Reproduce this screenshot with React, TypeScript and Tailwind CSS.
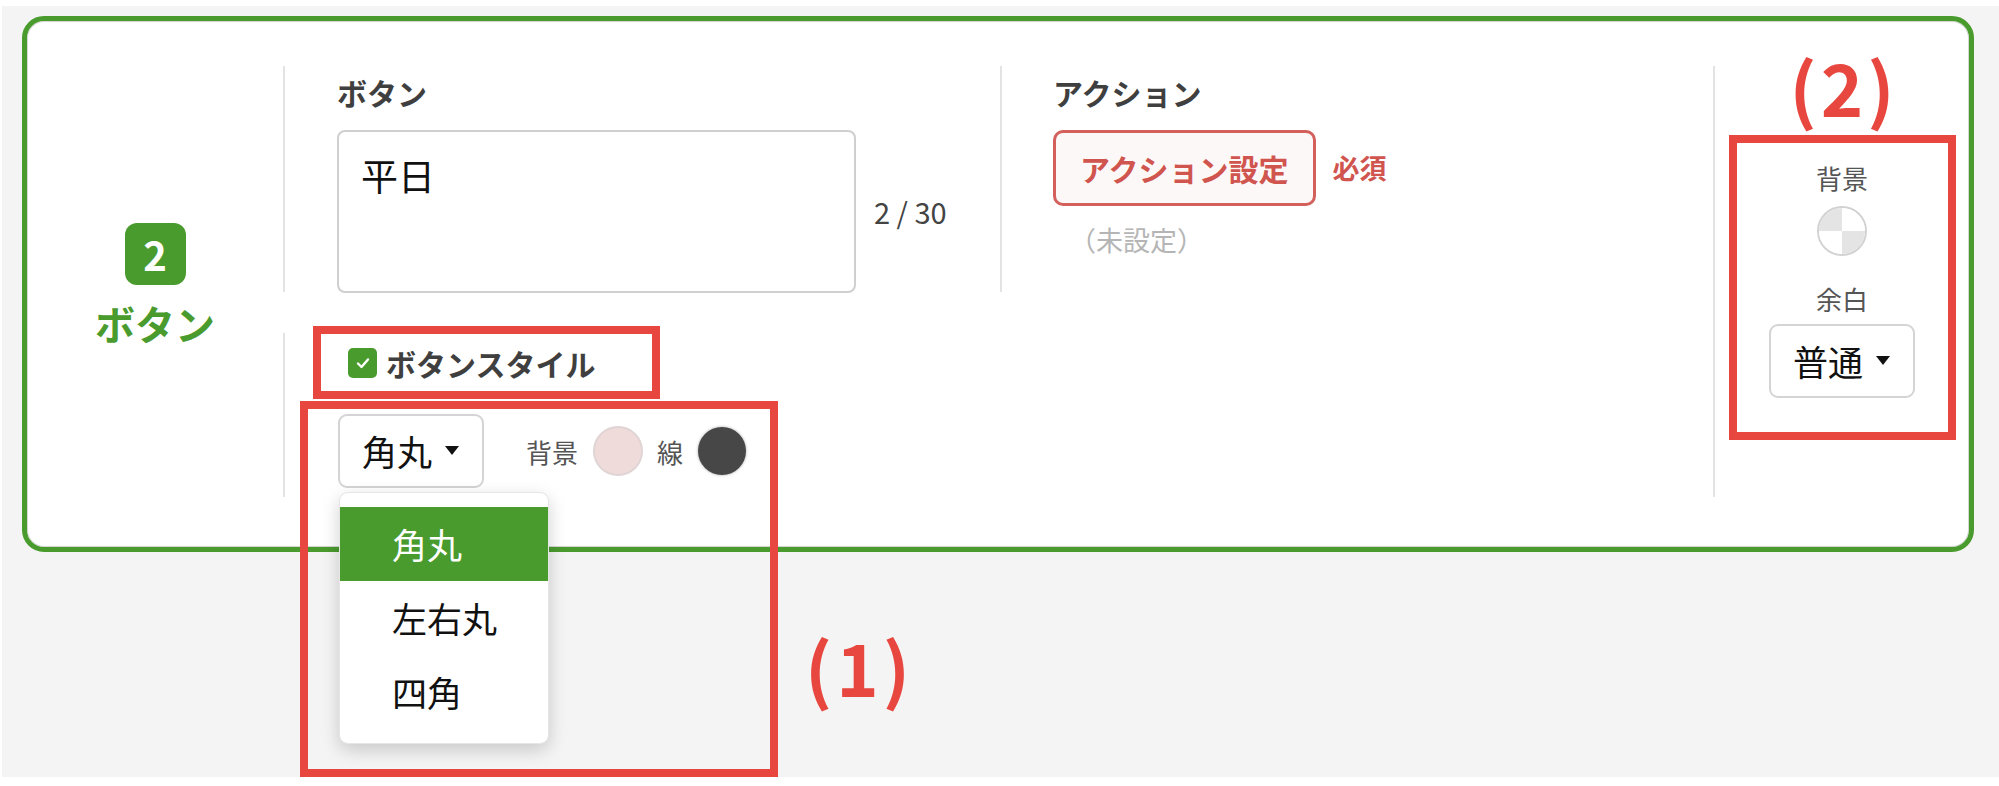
import React from "react";

const GREEN = "bg-[#4a9b2e]";

const Caret = () => (
  <svg width="14" height="10" viewBox="0 0 14 10" className="shrink-0">
    <polygon points="0,0 14,0 7,9" fill="#111" />
  </svg>
);

const Select = ({ label, className = "" }) => (
  <div
    className={`flex items-center justify-between h-[74px] w-[146px] pl-[22px] pr-[23px] border-2 border-[#d4d4d4] rounded-[9px] bg-white ${className}`}
  >
    <span className="text-[35px] leading-[44px] text-[#111]">{label}</span>
    <Caret />
  </div>
);

const ShapeMenu = () => (
  <div className="absolute left-[1px] top-[78px] w-[210px] pt-[14px] pb-[14px] bg-white rounded-[9px] border border-[#e6e6e6] shadow-[0_6px_18px_rgba(0,0,0,0.18)] z-10">
    {["角丸", "左右丸", "四角"].map((item, i) => (
      <div
        key={item}
        className={`h-[74px] flex items-center pl-[52px] text-[35px] ${
          i === 0 ? `${GREEN} text-white` : "text-[#111]"
        }`}
      >
        {item}
      </div>
    ))}
  </div>
);

const Checker = () => (
  <div className="w-[50px] h-[50px] rounded-full border-2 border-[#d2d2d2] overflow-hidden grid grid-cols-2 grid-rows-2">
    <div className="bg-[#e4e4e4]" />
    <div className="bg-white" />
    <div className="bg-white" />
    <div className="bg-[#e4e4e4]" />
  </div>
);

export default function App() {
  return (
    <div className="w-[1999px] h-[786px] bg-white pt-[6px] pb-[9px] pl-[2px] overflow-hidden font-['Noto_Sans_CJK_JP','Noto_Sans',sans-serif]">
      <div className="h-full bg-[#f4f4f4] pt-[10px] pl-[20px]">
        <div className="w-[1952px] h-[536px] flex bg-white border-[5px] border-[#4a9b2e] rounded-[22px] shadow-[inset_0_0_0_1px_#d6d6d6]">
          {/* block number */}
          <div className="w-[256px] shrink-0 flex flex-col items-center justify-center pt-[2px]">
            <div className={`w-[61px] h-[62px] rounded-[12px] ${GREEN} flex items-center justify-center text-white text-[40px] font-bold leading-none`}>
              2
            </div>
            <div className="mt-[14px] text-[40px] leading-[48px] font-bold text-[#4a9b2e]">ボタン</div>
          </div>

          {/* settings */}
          <div className="flex-1 flex flex-col pt-[45px]">
            <div className="flex h-[226px]">
              <div className="w-[717px] border-l-2 border-[#e3e3e3] pl-[52px] pt-[6px]">
                <div className="text-[30px] leading-[40px] font-bold text-[#3f3f3f]">ボタン</div>
                <div className="mt-[18px] flex items-center">
                  <div className="w-[519px] h-[163px] border-2 border-[#cfcfcf] rounded-[8px] pl-[22px] pt-[20px] text-[37px] leading-[46px] text-[#111]">
                    平日
                  </div>
                  <span className="ml-[18px] text-[29px] text-[#444]">2 / 30</span>
                </div>
              </div>
              <div className="flex-1 border-l-2 border-[#e3e3e3] pl-[51px] pt-[6px]">
                <div className="text-[30px] leading-[40px] font-bold text-[#3f3f3f]">アクション</div>
                <div className="mt-[18px] flex items-center">
                  <div className="h-[76px] px-[24px] flex items-center border-[3px] border-[#d3605b] rounded-[10px] bg-[#fdf8f8] text-[30px] font-bold text-[#d0554f]">
                    アクション設定
                  </div>
                  <span className="ml-[17px] text-[27px] font-bold text-[#d0554f]">必須</span>
                </div>
                <div className="mt-[16px] ml-[16px] text-[27px] leading-[36px] text-[#b5b5b5]">（未設定）</div>
              </div>
            </div>

            <div className="relative mt-[41px] h-[164px] border-l-2 border-[#e3e3e3]">
              <div className="ml-[28px] -mt-[7px] w-[347px] h-[73px] border-[8px] border-[#e8473f] flex items-center pl-[27px]">
                <div className={`w-[29px] h-[30px] rounded-[5px] ${GREEN} flex items-center justify-center`}>
                  <svg width="18" height="18" viewBox="0 0 18 18">
                    <path d="M4 9.5 L7.5 13 L14 5.5" fill="none" stroke="white" strokeWidth="2.4" strokeLinecap="round" strokeLinejoin="round" />
                  </svg>
                </div>
                <span className="ml-[9px] text-[30px] leading-[40px] font-bold text-[#3f3f3f]">ボタンスタイル</span>
              </div>

              <div className="mt-[15px] ml-[53px] flex items-center">
                <div className="relative">
                  <Select label="角丸" />
                  <ShapeMenu />
                </div>
                <span className="ml-[42px] text-[26px] text-[#555]">背景</span>
                <div className="ml-[15px] w-[50px] h-[50px] rounded-full bg-[#f0dbdb] border-2 border-[#e0d4d4]" />
                <span className="ml-[14px] text-[26px] text-[#555]">線</span>
                <div className="ml-[15px] w-[48px] h-[48px] rounded-full bg-[#474747] shadow-[0_0_3px_rgba(0,0,0,0.35)]" />
              </div>

              {/* annotation (1) */}
              <div className="absolute left-[15px] top-[68px] w-[478px] h-[376px] border-[8px] border-[#e8473f]" />
              <div className="absolute left-[520px] top-[288px] text-[72px] leading-[90px] tracking-[4px] font-bold text-[#e8473f]">(1)</div>
            </div>
          </div>

          {/* background / padding */}
          <div className="w-[256px] shrink-0 flex flex-col pt-[45px]">
            <div className="h-[431px] border-l-2 border-[#e3e3e3] flex flex-col items-center">
              <div className="-mt-[25px] pl-[4px] text-[72px] leading-[90px] tracking-[4px] font-bold text-[#e8473f]">(2)</div>
              <div className="mt-[4px] w-[227px] h-[305px] border-[8px] border-[#e8473f] flex flex-col items-center pt-[17px]">
                <span className="text-[26px] leading-[36px] text-[#555]">背景</span>
                <div className="mt-[10px]">
                  <Checker />
                </div>
                <span className="mt-[25px] text-[26px] leading-[36px] text-[#555]">余白</span>
                <Select label="普通" className="mt-[7px]" />
              </div>
            </div>
          </div>
        </div>
      </div>
    </div>
  );
}
